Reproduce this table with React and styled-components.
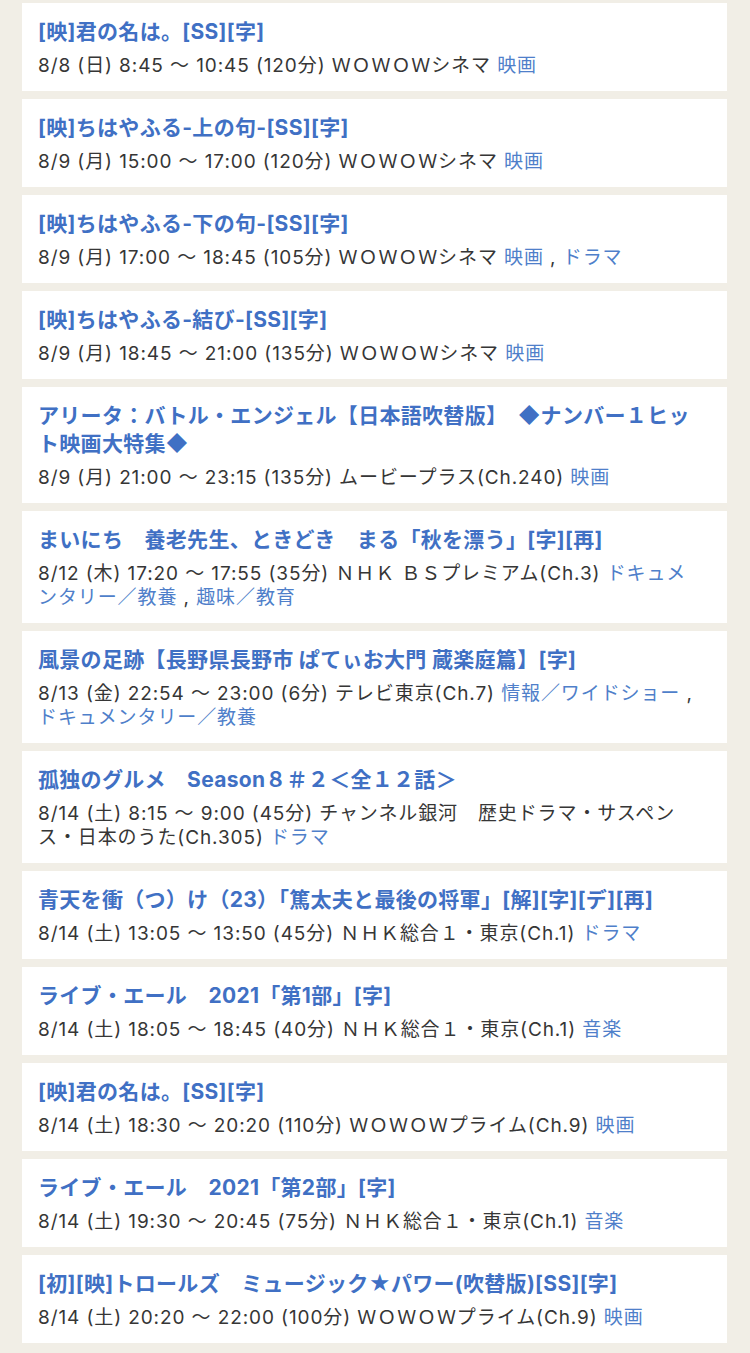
import styled, { createGlobalStyle } from "styled-components";

const GlobalStyle = createGlobalStyle`
  html, body {
    margin: 0;
    padding: 0;
    background: #f1eee6;
  }
  body {
    font-family: Inter, "Noto Sans CJK JP", sans-serif;
    -webkit-font-smoothing: antialiased;
  }
`;

const programs = [
  {
    title: "[映]君の名は。[SS][字]",
    detail: "8/8 (日) 8:45 ～ 10:45 (120分) ＷＯＷＯＷシネマ",
    genres: ["映画"],
  },
  {
    title: "[映]ちはやふる-上の句-[SS][字]",
    detail: "8/9 (月) 15:00 ～ 17:00 (120分) ＷＯＷＯＷシネマ",
    genres: ["映画"],
  },
  {
    title: "[映]ちはやふる-下の句-[SS][字]",
    detail: "8/9 (月) 17:00 ～ 18:45 (105分) ＷＯＷＯＷシネマ",
    genres: ["映画", "ドラマ"],
  },
  {
    title: "[映]ちはやふる-結び-[SS][字]",
    detail: "8/9 (月) 18:45 ～ 21:00 (135分) ＷＯＷＯＷシネマ",
    genres: ["映画"],
  },
  {
    title:
      "アリータ：バトル・エンジェル【日本語吹替版】　◆ナンバー１ヒット映画大特集◆",
    detail: "8/9 (月) 21:00 ～ 23:15 (135分) ムービープラス(Ch.240)",
    genres: ["映画"],
  },
  {
    title: "まいにち　養老先生、ときどき　まる「秋を漂う」[字][再]",
    detail: "8/12 (木) 17:20 ～ 17:55 (35分) ＮＨＫ ＢＳプレミアム(Ch.3)",
    genres: ["ドキュメンタリー／教養", "趣味／教育"],
  },
  {
    title: "風景の足跡【長野県長野市 ぱてぃお大門 蔵楽庭篇】[字]",
    detail: "8/13 (金) 22:54 ～ 23:00 (6分) テレビ東京(Ch.7)",
    genres: ["情報／ワイドショー", "ドキュメンタリー／教養"],
  },
  {
    title: "孤独のグルメ　Season８＃２＜全１２話＞",
    detail:
      "8/14 (土) 8:15 ～ 9:00 (45分) チャンネル銀河　歴史ドラマ・サスペンス・日本のうた(Ch.305)",
    genres: ["ドラマ"],
  },
  {
    title: "青天を衝（つ）け（23）「篤太夫と最後の将軍」[解][字][デ][再]",
    detail: "8/14 (土) 13:05 ～ 13:50 (45分) ＮＨＫ総合１・東京(Ch.1)",
    genres: ["ドラマ"],
  },
  {
    title: "ライブ・エール　2021「第1部」[字]",
    detail: "8/14 (土) 18:05 ～ 18:45 (40分) ＮＨＫ総合１・東京(Ch.1)",
    genres: ["音楽"],
  },
  {
    title: "[映]君の名は。[SS][字]",
    detail: "8/14 (土) 18:30 ～ 20:20 (110分) ＷＯＷＯＷプライム(Ch.9)",
    genres: ["映画"],
  },
  {
    title: "ライブ・エール　2021「第2部」[字]",
    detail: "8/14 (土) 19:30 ～ 20:45 (75分) ＮＨＫ総合１・東京(Ch.1)",
    genres: ["音楽"],
  },
  {
    title: "[初][映]トロールズ　ミュージック★パワー(吹替版)[SS][字]",
    detail: "8/14 (土) 20:20 ～ 22:00 (100分) ＷＯＷＯＷプライム(Ch.9)",
    genres: ["映画"],
  },
];

function ProgramCard({ program }) {
  return (
    <Card>
      <Title href="#">{program.title}</Title>
      <Detail>
        {program.detail}{" "}
        {program.genres.map((genre, i) => (
          <span key={genre}>
            {i > 0 && "\u00a0, "}
            <Genre href="#">{genre}</Genre>
          </span>
        ))}
      </Detail>
    </Card>
  );
}

export default function App() {
  return (
    <>
      <GlobalStyle />
      <List>
        {programs.map((program, i) => (
          <ProgramCard key={i} program={program} />
        ))}
      </List>
    </>
  );
}

const List = styled.div`
  display: flex;
  flex-direction: column;
  gap: 8px;
  padding: 3px 23px 12px 22px;
`;

const Card = styled.div`
  background: #ffffff;
  padding: 15px 33px 13px 16px;
  display: flex;
  flex-direction: column;
  gap: 8px;
`;

const Title = styled.a`
  display: block;
  color: #4070c4;
  font-size: 21px;
  font-weight: 700;
  line-height: 28px;
  letter-spacing: 0.3px;
  text-decoration: none;
`;

const Detail = styled.div`
  color: #363636;
  font-size: 19px;
  line-height: 24px;
  letter-spacing: 0.9px;
`;

const Genre = styled.a`
  color: #4f7fca;
  text-decoration: none;
`;
